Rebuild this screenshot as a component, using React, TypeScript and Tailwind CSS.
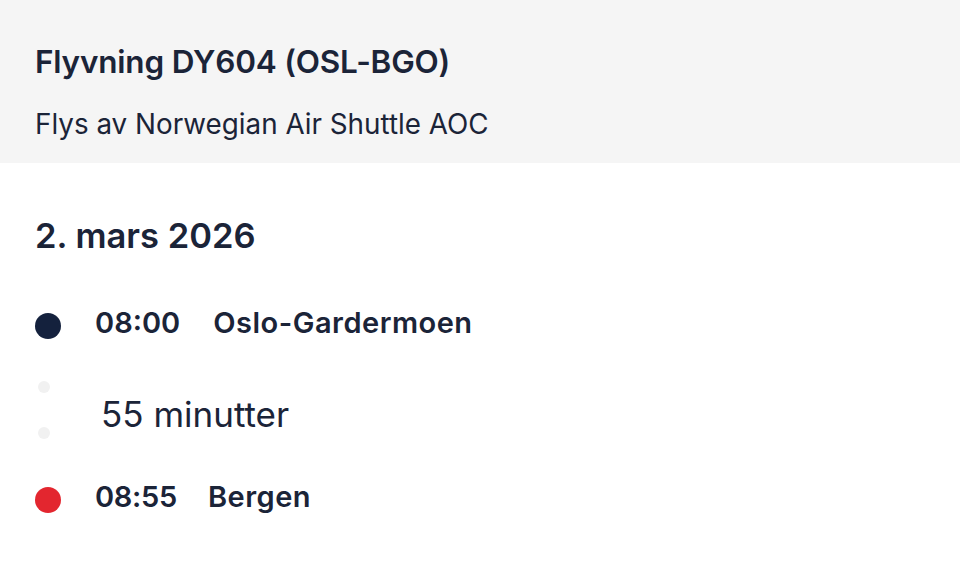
export default function App() {
  return (
    <div className="w-[960px] h-[568px] bg-white text-[#1b2438] overflow-hidden" style={{ fontFamily: "Inter, 'Noto Sans', sans-serif" }}>
      <div className="bg-[#f5f5f5] h-[163px] px-[35px] pt-[43px]">
        <div className="text-[31.5px] font-semibold leading-[38px] tracking-[-0.2px]">Flyvning DY604 (OSL-BGO)</div>
        <div className="text-[27.8px] leading-[34px] mt-[26px]">Flys av Norwegian Air Shuttle AOC</div>
      </div>
      <div className="px-[35px] pt-[53px]">
        <div className="text-[34.5px] font-semibold leading-[40px]">2. mars 2026</div>
        <div className="mt-[49px] flex items-center h-[36px]">
          <div className="w-[26px] h-[26px] rounded-full bg-[#14213d] mt-[6px]" />
          <div className="ml-[34px] text-[29px] font-semibold">08:00</div>
          <div className="ml-[33px] text-[29px] font-semibold tracking-[0.5px]">Oslo-Gardermoen</div>
        </div>
        <div className="flex items-center h-[138px]">
          <div className="flex flex-col items-center gap-[34px] w-[18px]">
            <div className="w-[12px] h-[12px] rounded-full bg-[#f1f1f1]" />
            <div className="w-[12px] h-[12px] rounded-full bg-[#f1f1f1]" />
          </div>
          <div className="ml-[48px] mt-[8px] text-[35px] leading-[40px]">55 minutter</div>
        </div>
        <div className="flex items-center h-[36px]">
          <div className="w-[26px] h-[26px] rounded-full bg-[#e3262f] mt-[6px]" />
          <div className="ml-[34px] text-[29px] font-semibold tracking-[-0.3px]">08:55</div>
          <div className="ml-[31px] text-[29px] font-semibold tracking-[0.5px]">Bergen</div>
        </div>
      </div>
    </div>
  );
}
